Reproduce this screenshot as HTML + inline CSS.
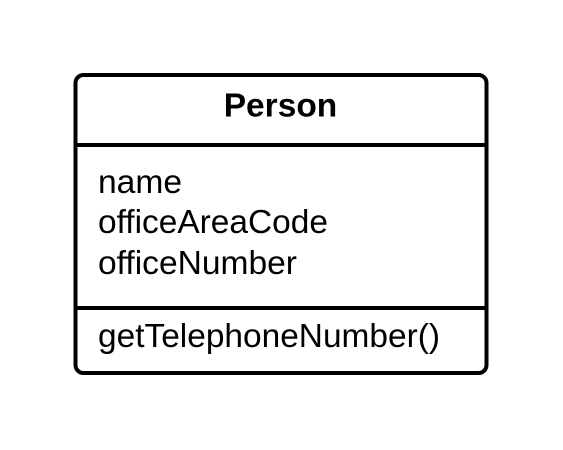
<!DOCTYPE html>
<html><head><style>
html,body{margin:0;padding:0;background:#fff;width:563px;height:450px;overflow:hidden}
</style></head><body>
<svg width="563" height="450" xmlns="http://www.w3.org/2000/svg">
<rect x="75.5" y="75" width="411" height="298" rx="8" ry="8" fill="#fff" stroke="#000" stroke-width="4"/>
<line x1="75" y1="145" x2="487" y2="145" stroke="#000" stroke-width="4"/>
<line x1="75" y1="308" x2="487" y2="308" stroke="#000" stroke-width="4"/>
<text x="280.5" y="116.5" text-anchor="middle" font-family="Liberation Sans, sans-serif" font-weight="bold" font-size="33.5">Person</text>
<g font-family="Liberation Sans, sans-serif" font-size="33.5">
<text x="98" y="193" textLength="84" lengthAdjust="spacingAndGlyphs">name</text>
<text x="98" y="233" textLength="230" lengthAdjust="spacingAndGlyphs">officeAreaCode</text>
<text x="98" y="274" textLength="199" lengthAdjust="spacingAndGlyphs">officeNumber</text>
<text x="98" y="347" textLength="342" lengthAdjust="spacingAndGlyphs">getTelephoneNumber()</text>
</g>
</svg>
</body></html>
